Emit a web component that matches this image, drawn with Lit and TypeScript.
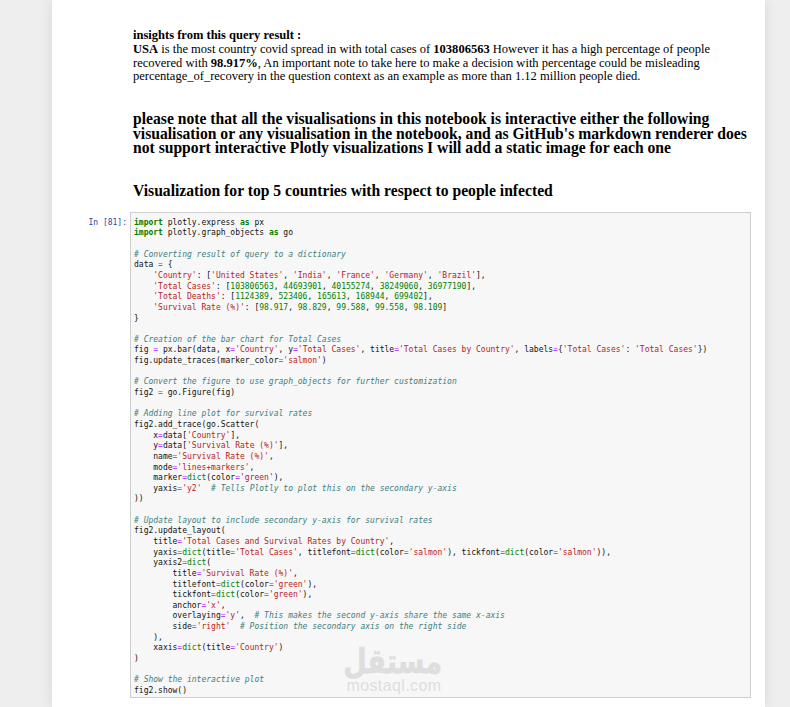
import { LitElement, html, css } from "lit";
import { customElement } from "lit/decorators.js";

const CODE = `import plotly.express as px
import plotly.graph_objects as go

# Converting result of query to a dictionary
data = {
    'Country': ['United States', 'India', 'France', 'Germany', 'Brazil'],
    'Total Cases': [103806563, 44693901, 40155274, 38249060, 36977190],
    'Total Deaths': [1124389, 523406, 165613, 168944, 699402],
    'Survival Rate (%)': [98.917, 98.829, 99.588, 99.558, 98.109]
}

# Creation of the bar chart for Total Cases
fig = px.bar(data, x='Country', y='Total Cases', title='Total Cases by Country', labels={'Total Cases': 'Total Cases'})
fig.update_traces(marker_color='salmon')

# Convert the figure to use graph_objects for further customization
fig2 = go.Figure(fig)

# Adding line plot for survival rates
fig2.add_trace(go.Scatter(
    x=data['Country'],
    y=data['Survival Rate (%)'],
    name='Survival Rate (%)',
    mode='lines+markers',
    marker=dict(color='green'),
    yaxis='y2'  # Tells Plotly to plot this on the secondary y-axis
))

# Update layout to include secondary y-axis for survival rates
fig2.update_layout(
    title='Total Cases and Survival Rates by Country',
    yaxis=dict(title='Total Cases', titlefont=dict(color='salmon'), tickfont=dict(color='salmon')),
    yaxis2=dict(
        title='Survival Rate (%)',
        titlefont=dict(color='green'),
        tickfont=dict(color='green'),
        anchor='x',
        overlaying='y',  # This makes the second y-axis share the same x-axis
        side='right'  # Position the secondary axis on the right side
    ),
    xaxis=dict(title='Country')
)

# Show the interactive plot
fig2.show()`;

const TOKEN = /(#.*$)|('[^']*')|\b(import|as)\b|\b(dict)\b|(\b\d+(?:\.\d+)?\b)|(=|\+)/gm;

function highlight(src: string) {
  const parts: unknown[] = [];
  let last = 0;
  for (const m of src.matchAll(TOKEN)) {
    const i = m.index ?? 0;
    if (i > last) parts.push(src.slice(last, i));
    const cls = m[1] ? "c" : m[2] ? "s" : m[3] ? "k" : m[4] ? "b" : m[5] ? "n" : "o";
    parts.push(html`<span class=${cls}>${m[0]}</span>`);
    last = i + m[0].length;
  }
  parts.push(src.slice(last));
  return parts;
}

@customElement("app-root")
export class AppRoot extends LitElement {
  static styles = css`
    :host {
      display: block;
      height: 707px;
      overflow: hidden;
      background: #eeeeee;
    }
    .sheet {
      position: relative;
      box-sizing: border-box;
      margin-left: 52px;
      width: 713px;
      height: 707px;
      background: #fff;
      box-shadow: 0 0 12px rgba(0, 0, 0, 0.1);
      padding-top: 28px;
      color: #000;
      font-family: "Liberation Serif", "Times New Roman", serif;
    }
    .md {
      margin-left: 81px;
      width: 625px;
    }
    .insight {
      margin: 0;
      padding-top: 0.7px;
      width: 590px;
      font-size: 12.53px;
      line-height: 13.9px;
    }
    h3 {
      margin: 0;
      font-size: 15.65px;
      line-height: 14.6px;
      font-weight: bold;
    }
    .note {
      margin-top: 27.7px;
    }
    .viz {
      margin-top: 28px;
    }
    .cell {
      display: flex;
      margin-top: 14px;
      align-items: flex-start;
    }
    .prompt {
      width: 78px;
      box-sizing: border-box;
      padding-right: 3px;
      padding-top: 5.4px;
      text-align: right;
      font: 8px/10.64px "DejaVu Sans Mono", monospace;
      color: #303f9f;
    }
    .code {
      box-sizing: border-box;
      width: 621px;
      height: 486px;
      margin: 0;
      padding: 4.4px 0 0 3px;
      border: 1px solid #cfcfcf;
      background: #f7f7f7;
      font: 8px/10.64px "DejaVu Sans Mono", monospace;
      color: #111;
      white-space: pre;
      overflow: hidden;
    }
    .c { color: #408080; font-style: italic; }
    .s { color: #ba2121; }
    .k { color: #008000; font-weight: bold; }
    .b { color: #008000; }
    .n { color: #008000; }
    .o { color: #aa22ff; }
    .mark {
      position: absolute;
      left: 294px;
      top: 645px;
      width: 96px;
      text-align: center;
      color: #dedede;
      pointer-events: none;
    }
    .ar {
      display: block;
      font: bold 27px/34px "DejaVu Sans", sans-serif;
      transform: scaleY(1.25);
      -webkit-text-stroke: 0.6px #dedede;
    }
    .en {
      display: block;
      font: 16px/13px "Liberation Sans", Arial, sans-serif;
      letter-spacing: 0.4px;
    }
  `;

  render() {
    return html`
      <div class="sheet">
        <div class="md">
          <p class="insight">
            <b>insights from this query result :</b><br />
            <b>USA</b> is the most country covid spread in with total cases of <b>103806563</b> However it has a high percentage of people recovered with <b>98.917%</b>, An important note to take here to make a decision with percentage could be misleading percentage_of_recovery in the question context as an example as more than 1.12 million people died.
          </p>
          <h3 class="note">please note that all the visualisations in this notebook is interactive either the following visualisation or any visualisation in the notebook, and as GitHub's markdown renderer does not support interactive Plotly visualizations I will add a static image for each one</h3>
          <h3 class="viz">Visualization for top 5 countries with respect to people infected</h3>
        </div>
        <div class="cell">
          <div class="prompt">In [81]:</div>
          <pre class="code">${highlight(CODE)}</pre>
        </div>
        <div class="mark">
          <span class="ar" dir="rtl" lang="ar">مستقل</span>
          <span class="en">mostaql.com</span>
        </div>
      </div>
    `;
  }
}
